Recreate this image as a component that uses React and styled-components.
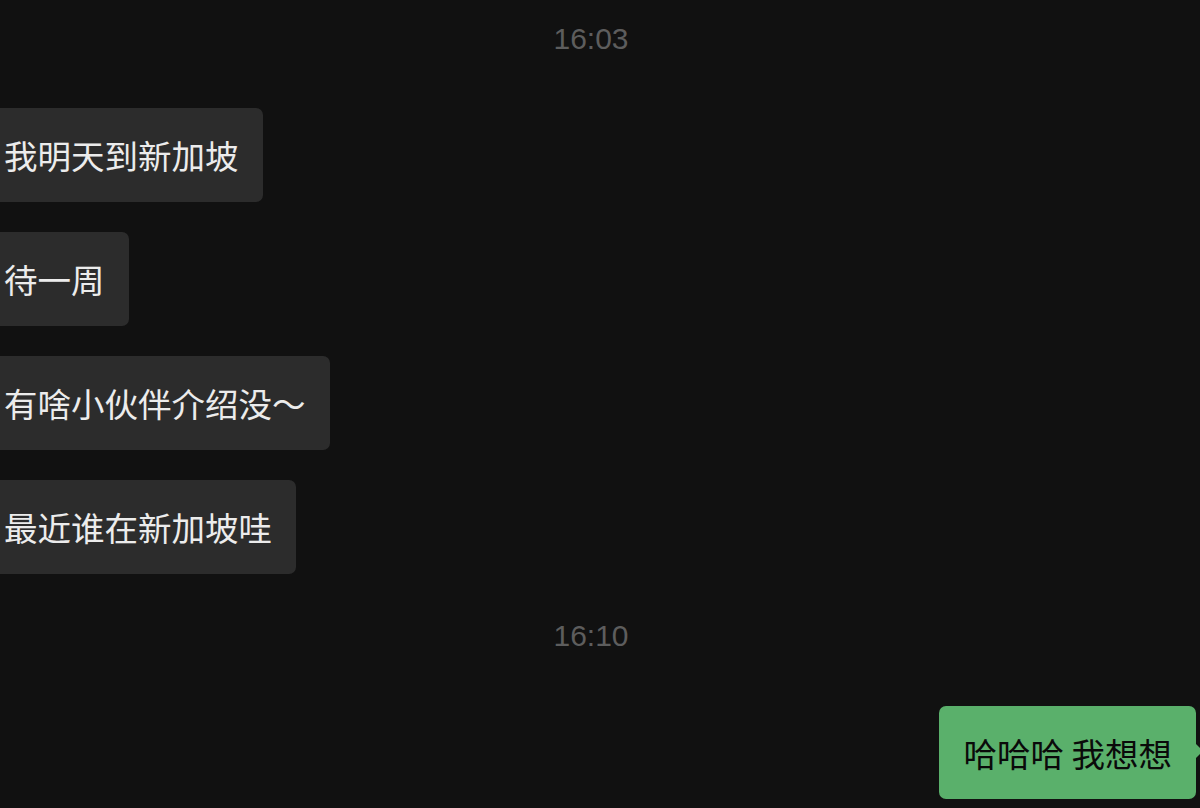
import React from 'react'
import styled, { createGlobalStyle, css } from 'styled-components'

const BGColor = '#111111'
const BubbleColor = '#2c2c2c'
const MineColor = '#5ab06b'
const TimeColor = '#5d5d5d'
const CJKFont = `'Noto Sans CJK SC', 'Noto Sans', sans-serif`

const GlobalStyle = createGlobalStyle`
    html, body {
        margin: 0;
        padding: 0;
        background: ${ BGColor };
        overflow: hidden;
    }
`

const messages = [
    { type: 'time', text: '16:03', margin: '19px 0 49px' },
    { type: 'in', text: '我明天到新加坡' },
    { type: 'in', text: '待一周' },
    { type: 'in', text: '有啥小伙伴介绍没～' },
    { type: 'in', text: '最近谁在新加坡哇' },
    { type: 'time', text: '16:10', margin: '42px 0 50px' },
    { type: 'out', text: '哈哈哈 我想想' }
]

const App = () => (
    <>
        <GlobalStyle />
        <Chat>
            {messages.map((m, i) => {
                if (m.type === 'time') return <TimeStamp key={i} margin={m.margin}>{m.text}</TimeStamp>
                return (
                    <Row key={i} mine={m.type === 'out'}>
                        <Bubble mine={m.type === 'out'}>{m.text}</Bubble>
                    </Row>
                )
            })}
        </Chat>
    </>
)

export default App

const Chat = styled.div`
    display: flex;
    flex-direction: column;
    width: 1200px;
    height: 808px;
    background: ${ BGColor };
    overflow: hidden;
`
const TimeStamp = styled.div`
    height: 40px;
    line-height: 40px;
    text-align: center;
    margin: ${ ({ margin }) => margin || '0' };
    padding-right: 18px;
    color: ${ TimeColor };
    font-family: 'Liberation Sans', Arial, sans-serif;
    font-size: 30px;
`
const Row = styled.div`
    display: flex;
    justify-content: ${ ({ mine }) => mine ? 'flex-end' : 'flex-start' };
    padding-right: ${ ({ mine }) => mine ? '4px' : '0' };
    & + & { margin-top: 30px; }
`
const Bubble = styled.div`
    position: relative;
    height: 94px;
    line-height: 94px;
    padding: 0 24px;
    border-radius: 7px;
    font-family: ${ CJKFont };
    font-size: 33.5px;
    font-weight: 400;
    white-space: nowrap;
    background: ${ BubbleColor };
    color: #ececec;
    margin-left: -20px;
    ${ ({ mine }) => mine && css`
        margin-left: 0;
        height: 93px;
        line-height: 93px;
        background: ${ MineColor };
        color: #0a0a0a;
        &::after {
            content: '';
            position: absolute;
            right: -7px;
            top: 37px;
            border-style: solid;
            border-width: 8px 0 8px 8px;
            border-color: transparent transparent transparent ${ MineColor };
        }
    ` }
`
